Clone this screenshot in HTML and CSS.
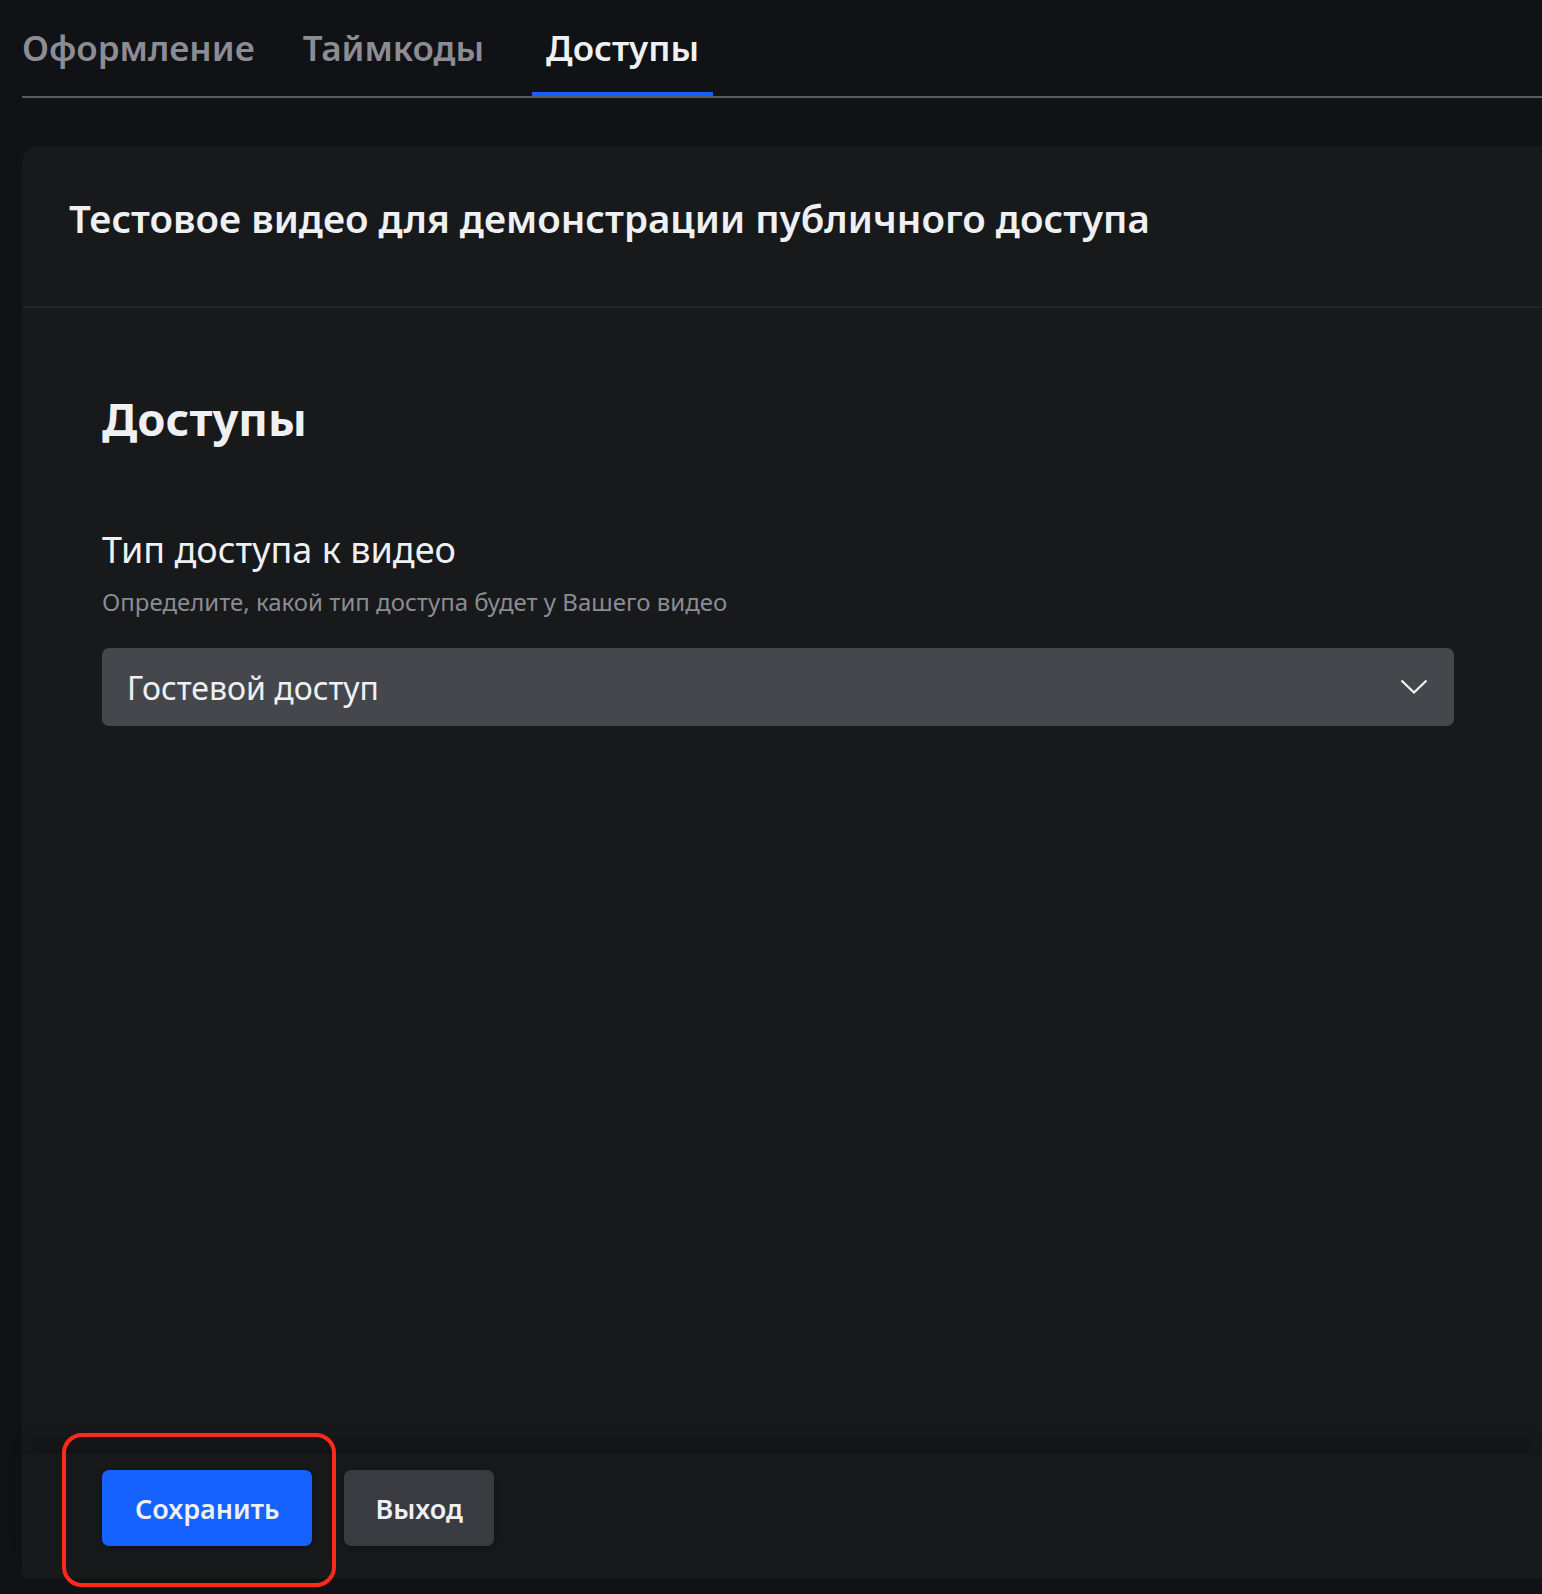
FILE: index.html
```html
<!DOCTYPE html>
<html lang="ru">
<head>
<meta charset="UTF-8" />
<meta name="viewport" content="width=device-width, initial-scale=1" />
<title>Доступы</title>
<link rel="stylesheet" href="styles.css">
</head>
<body>

<!-- Tabs -->
<nav class="tabs">
  <a class="tab" href="#">Оформление</a>
  <a class="tab" href="#">Таймкоды</a>
  <a class="tab active" href="#">Доступы</a>
</nav>

<!-- Settings panel -->
<div class="panel">
  <div class="panel-head">
    <h1>Тестовое видео для демонстрации публичного доступа</h1>
  </div>

  <div class="panel-body">
    <h2>Доступы</h2>

    <div class="field">
      <div class="field-title">Тип доступа к видео</div>
      <div class="field-hint">Определите, какой тип доступа будет у Вашего видео</div>
      <div class="select">
        <span>Гостевой доступ</span>
        <svg class="chevron" width="28" height="16" viewBox="0 0 28 16">
          <path d="M1.5 1.5 L14 13.5 L26.5 1.5" fill="none" stroke="#f2f3f5" stroke-width="2.2" />
        </svg>
      </div>
    </div>
  </div>

  <div class="panel-foot">
    <button class="btn btn-primary">Сохранить</button>
    <button class="btn btn-dark">Выход</button>
    <div class="highlight"></div>
  </div>
</div>

</body>
</html>
```

FILE: styles.css
```css
* {
  margin: 0; padding: 0; box-sizing: border-box;
  font-family: 'Noto Sans', 'Open Sans', sans-serif;
}
html, body {
  height: 100%;
}
body {
  background: #111215;
  color: #eef0f3;
  display: flex;
  flex-direction: column;
  padding: 0 0 16px 22px;
  overflow: hidden;
}
.tabs {
  display: flex;
  gap: 48px;
  border-bottom: 2px solid #5b5c61;
  height: 98px;
  flex-shrink: 0;
}
.tab {
  display: block;
  text-decoration: none;
  color: #8c8d94;
  font-size: 35px;
  font-weight: 600;
  line-height: 96px;
  height: 96px;
  border-bottom: 4px solid transparent;
}
.tab.active {
  color: #eef0f3;
  padding: 0 14px;
  border-bottom-color: #1662ff;
}
.panel {
  flex: 1;
  margin-top: 48px;
  background: #18191b;
  border-radius: 16px 0 0 0;
  display: flex;
  flex-direction: column;
}
.panel-head {
  height: 162px;
  padding: 0 47px 16px;
  border-bottom: 2px solid #222327;
  display: flex;
  align-items: center;
}
h1 {
  font-size: 38.5px;
  font-weight: 600;
  color: #eef0f3;
}
.panel-body {
  flex: 1;
  padding: 80px 80px 0;
}
h2 {
  font-size: 45.5px;
  font-weight: 700;
  line-height: 60px;
  margin-bottom: 80px;
}
.field {
  width: 1352px;
}
.field-title {
  font-size: 36px;
  line-height: 44px;
}
.field-hint {
  font-size: 24px;
  line-height: 30px;
  color: #8a8c93;
  margin-top: 15px;
  margin-bottom: 31px;
}
.select {
  height: 78px;
  background: #46474c;
  border-radius: 7px;
  display: flex;
  align-items: center;
  justify-content: space-between;
  padding: 0 26px 0 25px;
  font-size: 32px;
  color: #eef0f3;
}
.panel-foot {
  position: relative;
  height: 124px;
  padding: 16px 80px 0;
  display: flex;
  gap: 32px;
  align-items: flex-start;
  box-shadow: 0 -20px 20px -10px rgba(0, 0, 0, 0.25);
}
.btn {
  height: 76px;
  padding: 0 33px;
  border: none;
  border-radius: 7px;
  font-size: 27px;
  font-weight: 600;
  color: #eef0f3;
  cursor: pointer;
  box-shadow: 0 2px 6px rgba(0, 0, 0, 0.35);
}
.btn-primary {
  background: #1662ff;
}
.btn-dark {
  background: #393b40;
  padding: 0 31px;
}
/* red annotation frame around the save button */
.highlight {
  position: absolute;
  left: 40px;
  top: -21px;
  width: 274px;
  height: 154px;
  border: 4px solid #ff2a1a;
  border-radius: 20px;
  pointer-events: none;
}
```
